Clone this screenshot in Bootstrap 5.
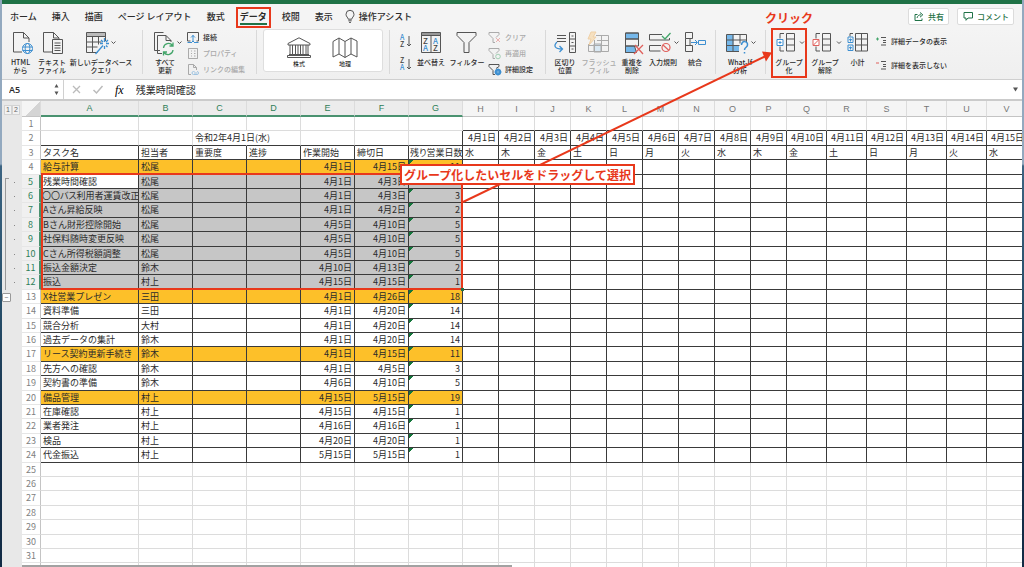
<!DOCTYPE html>
<html lang="ja">
<head>
<meta charset="utf-8">
<meta name="viewport" content="width=device-width, initial-scale=1">
<title>タスク管理表</title>
<link rel="stylesheet" href="https://cdn.jsdelivr.net/npm/bootstrap@5.3.0/dist/css/bootstrap.min.css">
<style>
:root{--xl:#1f7246;--mark:#e8381b;--ink:#2b2b2b;--blue:#3d8fd1}
body{font-family:"Noto Sans CJK JP",sans-serif;font-size:9px;line-height:12px;color:var(--ink);
 background:linear-gradient(#93a9bf 0,#93a9bf 164px,#3c6482 166px,#28506b 300px,#16304c 430px,#122b45 100%)}
.app-window{margin:0 2px;background:#fff}
.title-strip{height:4px;background:var(--xl)}
.tab-bar{height:25px;background:#f4f4f4;padding:0 8px 0 8px}
.tab-bar .tabs{gap:15px}
.tab-bar a{color:var(--ink);text-decoration:none;font-weight:500;white-space:nowrap;position:relative}
.tab-bar a.on{font-weight:700}
.tab-bar a.on::after{content:"";position:absolute;left:0;right:0;bottom:-2px;height:2px;background:var(--xl)}
.tab-bar a.on::before{content:"";position:absolute;inset:-4px -4px -5px;border:2px solid var(--mark)}
.top-btn{font-size:8px;line-height:10px;font-weight:500;color:var(--xl);background:#fff;border:1px solid #dcdcdc;border-radius:2px;height:17px;padding:0 4px 0 5px;gap:4px;white-space:nowrap}
.ribbon{display:grid;height:51px;background:linear-gradient(#f4f4f4,#efefef);border-bottom:1px solid #cfcfcf;padding:1px 0 0 2px;
 grid-template-columns:33px 30px 68px 14px 32px 69px 13px 120px 13px 19px 32px 40px 53px 10px 30px 38px 28px 34px 30px 11px 38px 12px 36px 36px 29px auto}
.tool{border:0;background:none;padding:0;font-size:7px;line-height:8px;font-weight:500;color:var(--ink);display:flex;flex-direction:column;align-items:center;white-space:nowrap;position:relative;min-width:0}
.tool svg{flex:none;height:28px}
.off{color:#a9a9a9!important}
.off svg{opacity:.45}
.vr-line{width:1px;height:44px;background:#d9d9d9;margin:0 auto}
.stack{margin-top:-1px;padding-left:2px}
.stack.wide{padding-left:6px}
.mini{border:0;background:none;padding:0;display:flex;align-items:center;gap:4px;font-size:7px;line-height:16px;height:16px;font-weight:500;color:var(--ink);white-space:nowrap}
.mini svg{flex:none}
.types{height:43px;margin:-1px 1px 0;background:#fff;border:1px solid #dedede;border-radius:3px}
.types button{font-size:6px;line-height:8px;border:0;background:none;padding:3px 0 0;display:flex;flex-direction:column;align-items:center;gap:2px;width:46px}
.ringed::after{content:"";position:absolute;inset:-2px 0 1px;border:2px solid var(--mark)}
svg{fill:none;stroke:#555;stroke-width:1;overflow:visible;display:block}
.b{stroke:var(--blue)}.g{stroke:#43a56a}.r{stroke:#e0605c}
svg text{stroke:none;fill:#444;font-size:8px;font-weight:500}
svg text.bt{fill:var(--blue)}
svg .small-az text{font-size:7px}
.formula{height:19px}
.formula input{border:0;background:none;outline:0;padding:0;color:var(--ink);font-size:10px;line-height:16px}
.name-box{width:62px;border-right:1px solid #d0d0d0;padding:0 4px 0 7px}
.formula .name-box input{width:40px;font-family:"Open Sans",sans-serif;font-size:9px;font-weight:600}
.formula button,.name-box button{border:0;background:none;padding:0}
.fx{font-family:"Liberation Serif",serif;font-style:italic;font-size:12px}
.sheet{border-top:2px solid #cbcbcb;background:#fff;position:relative}
.grid-table{table-layout:fixed;border-collapse:separate;border-spacing:0;width:1043px;margin:0}
.grid-table th,.grid-table td{padding:0 2px;height:14px;line-height:13px;font-size:9px;font-weight:400;border:0 solid #dcdcdc;border-width:0 1px 1px 0;white-space:nowrap;overflow:hidden}
.grid-table td.text-end{padding-left:0}
.grid-table tbody tr:nth-child(5n+2)>*,.grid-table tbody tr:nth-child(5n+4)>*{height:15px;line-height:14px}
.grid-table thead th{height:16px;line-height:14px;text-align:center;font-family:"Liberation Sans",sans-serif;color:#777;background:#f5f5f5;border-bottom-color:#c4c4c4;padding:0}
.grid-table thead th.sel{color:#2f8059;background:#ececec;border-bottom:2px solid #4a9270}
.grid-table thead th.corner{background:linear-gradient(135deg,#f5f5f5 55%,#d4d4d4 55%);border-bottom-width:1px}
.grid-table .gut{background:#e8e8e8!important;border:0;position:relative;overflow:visible;color:#777;padding:0}
.gut button{width:8px;height:10px;line-height:8px;font-size:7px;padding:0;border:1px solid #d3d3d3;background:#f2f2f2;color:#666;display:inline-block}
.gut.in::before{content:"";position:absolute;left:3px;top:0;bottom:0;width:1px;background:#999}
.gut.first::before{top:3px;width:4px;background:none;border:solid #999;border-width:1px 0 0 1px}
.gut.in::after{content:"";position:absolute;left:12px;top:7px;width:1px;height:1px;background:#888}
.grid-table td.gut button{width:9px;height:9px;line-height:7px;border-color:#999;background:#fff;display:block;border-radius:1px}
.grid-table th.num{color:#808080;text-align:center;padding:0;background:#fff;border-color:#e6e6e6;border-right-color:#c4c4c4}
.grid-table th.num.sel{color:#2f8059;background:#f0f0f0;border-right:2px solid #4a9270}
.grid-table td.k{border-bottom-color:#3a3a3a;border-right-color:#3a3a3a}
.grid-table td.kb{border-bottom-color:#3a3a3a}
.grid-table td.nr{border-right-color:transparent}
.grid-table td.spill{overflow:visible}
.grid-table td.tight{font-feature-settings:"palt";padding:0 0 0 1px}
.grid-table td.top{background:#fdc029}
.grid-table td.pick{background:#c6c6c6}
.grid-table td.tri{background-image:linear-gradient(135deg,#14763b 3px,transparent 3px)}
.hbar{position:absolute;left:20px;bottom:0;width:48%;height:2px;background:#a2a2a2}
.notes{position:absolute;left:0;top:0;pointer-events:none}
.callout{position:absolute;left:400px;top:164px;height:21px;line-height:17px;border:2px solid var(--mark);background:#fff;color:var(--mark);font-size:12px;font-weight:700;padding:0 2px;white-space:nowrap}
.click-note{position:absolute;left:765px;top:10px;color:var(--mark);font-size:12px;line-height:15px;font-weight:700}
</style>
</head>
<body class="vh-100 overflow-hidden position-relative">
<div class="app-window d-flex flex-column h-100 overflow-hidden">
<div class="title-strip flex-shrink-0"></div>
<nav class="tab-bar d-flex align-items-center flex-shrink-0">
 <div class="tabs d-flex align-items-center">
  <a href="#">ホーム</a><a href="#">挿入</a><a href="#">描画</a><a href="#">ページ レイアウト</a><a href="#">数式</a><a href="#" class="on">データ</a><a href="#">校閲</a><a href="#">表示</a>
 </div>
 <a href="#" class="d-flex align-items-center gap-1 ms-2 ps-1"><svg width="10" height="13" viewBox="0 0 10 13"><path d="M3.2 9.2C3.2 7.5 1 6.800 1 4.300a4 4 0 0 1 8 0C9 6.800 6.800 7.500 6.800 9.200zM3.300 10.800h3.400M4 12.400h2"/></svg>操作アシスト</a>
 <div class="ms-auto d-flex gap-2">
  <button class="top-btn d-flex align-items-center"><svg width="10" height="9" viewBox="0 0 10 9" style="stroke:#1f7246"><path d="M3.500 2.500H1v6h7V6.500M3 6C3.500 3.800 5 2.800 7 2.800M6 .5 8.800 2.800 6 5.200"/></svg>共有</button>
  <button class="top-btn d-flex align-items-center"><svg width="10" height="9" viewBox="0 0 10 9" style="stroke:#1f7246"><path d="M1 .5h8.500v5.500H5L3 8.300V6H1z"/></svg>コメント</button>
 </div>
</nav>
<div class="ribbon flex-shrink-0">
 <button class="tool"><svg width="33" viewBox="4 30 33 28"><path d="M22 52h-8.500V32.500h10l5.500 5.500v4M23.500 32.500v5.500h5.500"/><g class="b"><circle cx="27.500" cy="48.500" r="5"/><ellipse cx="27.500" cy="48.500" rx="2.300" ry="5"/><path d="M22.500 47h10M22.500 50.500h10"/></g></svg>HTML<br>から</button>
 <button class="tool"><svg width="30" viewBox="37 30 30 28"><path d="M52 52h-8.500V32.500h10l5.500 5.500v1M53.500 32.500v5.500h5.500M52.500 39.500h10v14h-10zM54.500 43h6M54.500 45.500h6M54.500 48h6M54.500 50.500h6"/></svg>テキスト<br>ファイル</button>
 <button class="tool"><svg width="68" viewBox="67 30 68 28"><path fill="#bbb" d="M86.500 32.500h19v4h-19z"/><path d="M105.500 41v-4.500h-19v16h11M86.500 42h15M86.500 47h11M92.500 36.500v16M98.500 36.500v8"/><g class="b"><path d="M95.500 54 103 45.500M104.500 38v4M104.500 46v3M100 43.500h3M106 43.500h3M101 40l2 2M108 40l-2 2M107.500 47l-1.500-1.500" stroke-width="1.300"/></g><path d="m111.500 41.500 2 2 2-2"/></svg>新しいデータベース<br>クエリ</button>
 <div class="vr-line"></div>
 <button class="tool"><svg width="32" viewBox="149 30 32 28"><path d="M160 50.500h-5.500V32.500h9M162 53.500h-4.500V35.500h8.500l5 5v1.500M166 35.500v5h5"/><g class="g" stroke-width="1.300"><path d="M163.500 48a5 5 0 0 1 9-2.500M173 50a5 5 0 0 1-9 2.500M173 42.500v3.500h-3.500M163.500 55.500V52h3.500"/></g><path d="m177.500 41.500 2 2 2-2"/></svg>すべて<br>更新</button>
 <div class="stack wide">
  <button class="mini"><svg width="12" height="13" viewBox="0 0 12 13"><path d="M3.500 10H.5V1.500h11V10h-2"/><path class="b" d="M.5 11.500h3.500M8 11.500h3.500M6 4v6M4 6.500l2-2 2 2M4 12l2-2 2 2"/></svg>接続</button>
  <button class="mini off" disabled><svg width="12" height="13" viewBox="0 0 12 13"><path d="M1.500 1.500h9v10h-9zM4 4h1M7 4h1.500M4 6.500h1M7 6.500h1.500M4 9h1M7 9h1.500"/></svg>プロパティ</button>
  <button class="mini off" disabled><svg width="12" height="13" viewBox="0 0 12 13"><path d="M4 11.500H1.500V1.500h5l3 3v2.500M6.500 1.500v3h3"/><path class="b" d="M5 10a1.500 1.500 0 0 1 1.500-1.500h1M10 8.500a1.500 1.500 0 0 1 0 3H6.500A1.500 1.500 0 0 1 5 10M7 10h3"/></svg>リンクの編集</button>
 </div>
 <div class="vr-line"></div>
 <div class="types d-flex ps-2 pt-1 mx-0">
  <div class="d-flex ps-1 w-100">
  <button><svg width="26" height="21" viewBox="0 0 26 21" stroke-width=".8"><path d="M2 6.500 13 .8l11 5.700v1.500H2zM4 8v9.500M6.500 8v9.500M9.500 8v9.500M12 8v9.500M14.500 8v9.500M17 8v9.500M20 8v9.500M22 8v9.500M3 17.500h20M1.500 20.500h23v-2h-23z"/></svg>株式</button>
  <button><svg width="26" height="21" viewBox="0 0 26 21" stroke-width=".8"><path d="M1 4.500 7 1l6 3.500L19 1l6 3v16l-6-3-6 3.500L7 17l-6 3zM7 1v16M13 4.500v16M19 1v16"/></svg>地理</button>
  </div>
 </div>
 <div class="vr-line"></div>
 <button class="tool" aria-label="昇順と降順"><svg width="19" viewBox="396 30 19 28"><g class="small-az"><text class="bt" x="400" y="40">A</text><text x="400" y="47">Z</text><text x="400" y="63">Z</text><text class="bt" x="400" y="70">A</text></g><path d="M409 36v10M407 44l2 2 2-2M409 59v10M407 67l2 2 2-2"/></svg></button>
 <button class="tool"><svg width="32" viewBox="415 30 32 28"><path fill="#999" d="M421.500 32.500h19v3h-19z"/><path d="M421.500 35.500h19v17h-19zM431 35.500v17"/><text x="423" y="44">Z</text><text class="bt" x="423" y="51">A</text><text class="bt" x="433" y="44">A</text><text x="433" y="51">Z</text></svg>並べ替え</button>
 <button class="tool"><svg width="40" viewBox="447 30 40 28"><path d="M457 32.500h19v3l-7 7v10h-5v-10l-7-7z"/></svg>フィルター</button>
 <div class="stack">
  <button class="mini off" disabled><svg width="12" height="13" viewBox="0 0 12 13"><path d="M0 1.500h10v2L7 6.500M0 1.500v2l4 4v4h2"/><path class="r" d="m7 7 4 4M11 7l-4 4"/></svg>クリア</button>
  <button class="mini off" disabled><svg width="12" height="13" viewBox="0 0 12 13"><path d="M0 1.500h10v2L7 6.500M0 1.500v2l4 4v4h2"/><circle class="g" cx="9" cy="9.500" r="2.300"/></svg>再適用</button>
  <button class="mini"><svg width="12" height="13" viewBox="0 0 12 13"><path d="M0 1.500h10v2L7 5.500M0 1.500v2l4 4v4h2"/><circle cx="9" cy="9" r="2.200" class="b" stroke-width="2"/><path class="b" d="M9 5.500v7M5.500 9h7"/></svg>詳細設定</button>
 </div>
 <div class="vr-line"></div>
 <button class="tool"><svg width="30" viewBox="550 30 30 28"><path d="M557 35.500h9M557 38.500h9M557 41.500h9M569.500 32.500h6v20h-6zM569.500 39h6M569.500 46h6M571.500 36h2M571.500 42.500h2M571.500 49h2"/><path class="b" stroke-width="1.300" d="M557 42c-4 4-2 7 5 7M559.500 46l3 3-3 3"/></svg>区切り<br>位置</button>
 <button class="tool off" disabled><svg width="38" viewBox="580 30 38 28"><path fill="#bcdcf5" d="M594 44h7v8h-7z"/><path d="M596 35.500h12.500v16H588.500V44M588.500 45.500h20M594.500 40v11.500M601.500 35.500v16M597 40.500h11.500"/><path fill="#f9ca83" stroke="#eba64a" d="M591 32h5l-3 5h3l-7 8 2-6h-3z"/></svg>フラッシュ<br>フィル</button>
 <button class="tool"><svg width="28" viewBox="618 30 28 28"><path fill="#76b8ea" d="M625.500 33h13v6h-13zM625.500 46h9l2 6.500h-11z"/><path d="M638.500 46V33h-13v19.500h8M625.500 39h13M625.500 46h13"/><path class="r" stroke-width="1.300" d="m635 45 8 9M643 45l-9 9"/></svg>重複を<br>削除</button>
 <button class="tool"><svg width="34" viewBox="646 30 34 28"><path d="M662 34.500h-12.500v5.500h20V38M661 45.500h-11.500v5.500h11"/><path class="g" stroke-width="1.300" d="m662 36 3 3 5.500-6"/><g class="r" stroke-width="1.200"><circle cx="666" cy="47.500" r="4"/><path d="m663 45 6 5.500"/></g><path d="m674.500 41.500 2 2 2-2"/></svg>入力規則</button>
 <button class="tool"><svg width="30" viewBox="680 30 30 28"><path d="M685.500 32.500h7v6h-7zM685.500 38.500V51.500h7v-6h-7M690 38.500v7"/><path class="b" d="M691 42.500h6M695 40l2.500 2.500L695 45M698.500 40.500h7v4h-7z"/></svg>統合</button>
 <div class="vr-line"></div>
 <button class="tool"><svg width="38" viewBox="721 30 38 28"><path fill="#76b8ea" stroke="none" d="M726.500 35h7v16h-7zM733 45h6v6h-6z"/><path d="M739 51.500h-12.500V34.500h20V42M726.500 40h20M726.500 45.500h13M733 34.500v17M740 34.500v9"/><path class="b" stroke-width="1.500" d="M741.500 45c0-5 6.500-4 6 0 0 2.500-3 2-3 5M744.500 52v1.500"/><path d="m751.500 41.500 2 2 2-2"/></svg>What-If<br>分析</button>
 <div class="vr-line"></div>
 <button class="tool ringed"><svg width="36" viewBox="771 30 36 28"><path d="M786.500 33.500h8v17.500h-8zM786.500 39h8M786.500 45h8M784 33.500h-4v5M780 46.500V51h4"/><path class="b" fill="#fff" d="M777 39.500h6v6h-6zM778.500 42.500h3M780 41v3"/><path d="m800 41.500 2 2 2-2"/></svg>グループ<br>化</button>
 <button class="tool"><svg width="36" viewBox="807 30 36 28"><path d="M822.500 33.500h8v17.500h-8zM822.500 39h8M822.500 45h8M820 33.500h-4v5M816 46.500V51h4"/><path class="r" fill="#fff" d="M813 39.500h6v6h-6zM813.500 45l5-5"/><path d="m837 41.500 2 2 2-2"/></svg>グループ<br>解除</button>
 <button class="tool"><svg width="29" viewBox="843 30 29 28"><path d="M855.500 33.500h12v17.500h-12zM855.500 39h12M855.500 45h12M861.500 33.500V51M853 33.500h-3v3M850 50.500V51"/><path class="b" d="M848 37h5v5.500h-5zM848 45h5v5.500h-5zM849 39.700h3M850.500 38.500v3M849 47.700h3M850.500 46.500v3"/></svg>小計</button>
 <div class="ps-1 d-flex flex-column gap-2 pt-1 stack">
  <button class="mini"><svg width="11" height="10" viewBox="0 0 11 10"><path d="M5 1.500h5M7 4.500h3M7 6.500h3M5 9h5"/><path class="g" d="M0 3h3M1.500 1.500v3"/></svg>詳細データの表示</button>
  <button class="mini"><svg width="11" height="10" viewBox="0 0 11 10"><path d="M5 1.500h5M7 4.500h3M7 6.500h3M5 9h5"/><path class="r" d="M0 3h3"/></svg>詳細を表示しない</button>
 </div>
</div>
<div class="formula d-flex align-items-center flex-shrink-0">
 <div class="name-box h-100 d-flex align-items-center justify-content-between"><input value="A5" aria-label="名前ボックス"><button aria-label="上下"><svg width="5" height="11" viewBox="0 0 5 11"><path fill="#555" stroke="none" d="M.5 3.500h4L2.500 0zM.5 7.500h4L2.500 11z"/></svg></button></div>
 <button class="ps-2" aria-label="キャンセル"><svg width="9" height="9" viewBox="0 0 9 9" style="stroke:#bbb"><path stroke-width="1.300" d="m1 1 7 7M8 1 1 8"/></svg></button>
 <button class="ms-2 ps-1" aria-label="入力"><svg width="10" height="9" viewBox="0 0 10 9" style="stroke:#bbb"><path stroke-width="1.500" d="m.5 5 3 3L9.500 1"/></svg></button>
 <button class="fx ms-2 ps-1 pe-2" aria-label="関数の挿入">fx</button>
 <input class="flex-grow-1 ps-1" value="残業時間確認" aria-label="数式バー">
 <button class="pe-1" aria-label="展開"><svg width="5" height="5" viewBox="0 0 5 5"><path fill="#555" stroke="none" d="M0 .5h5L2.500 4.500z"/></svg></button>
</div>
<main class="sheet flex-grow-1 overflow-hidden">
 <table class="grid-table"><colgroup id="cols"></colgroup><thead><tr id="head"></tr></thead><tbody id="body"></tbody></table>
 <div class="hbar"></div>
</main>
</div>
<svg class="notes" width="1024" height="567" viewBox="0 0 1024 567">
 <g style="stroke:#e8381b" stroke-width="2"><rect x="42" y="174" width="420" height="115"/><path d="M463 202 766 56"/></g>
 <path d="M762 51.500 772 52.500 766 61.500z" fill="#e8381b" stroke="none"/>
 <path d="M461 288h3v3h-3z" fill="#1f7246" stroke="none"/>
</svg>
<div class="callout">グループ化したいセルをドラッグして選択</div>
<div class="click-note">クリック</div>
<script>
// Column widths: outline gutter, row numbers, A to V
const widths=[20,19,98,...Array(6).fill(54),...Array(9).fill(36),...Array(6).fill(40)];
document.getElementById('cols').innerHTML=widths.map(w=>`<col style="width:${w}px">`).join('');
document.querySelector('.grid-table').style.width=widths.reduce((a,b)=>a+b)+'px';
const letters='ABCDEFGHIJKLMNOPQRSTUV'.split('');
document.getElementById('head').innerHTML='<th class="gut"><button>1</button><button>2</button></th><th class="corner"></th>'+
 letters.map((l,i)=>`<th class="${i<7?'sel':''}">${l}</th>`).join('');
// Rows 4 onwards: task, owner, start, deadline, business days left
const tasks=[
 ['給与計算','松尾','4月1日','4月15日','11'],['残業時間確認','松尾','4月1日','4月3日','3'],
 ['〇〇バス利用者運賃改正','松尾','4月1日','4月3日','3'],['Aさん昇給反映','松尾','4月1日','4月2日','2'],
 ['Bさん財形控除開始','松尾','4月5日','4月10日','5'],['社保料随時変更反映','松尾','4月5日','4月10日','5'],
 ['Cさん所得税額調整','松尾','4月5日','4月10日','5'],['振込金額決定','鈴木','4月10日','4月13日','2'],
 ['振込','村上','4月15日','4月15日','1'],['X社営業プレゼン','三田','4月1日','4月26日','18'],
 ['資料準備','三田','4月1日','4月20日','14'],['競合分析','大村','4月1日','4月20日','14'],
 ['過去データの集計','鈴木','4月1日','4月20日','14'],['リース契約更新手続き','鈴木','4月1日','4月15日','11'],
 ['先方への確認','鈴木','4月1日','4月5日','3'],['契約書の準備','鈴木','4月6日','4月10日','5'],
 ['備品管理','村上','4月15日','5月15日','19'],['在庫確認','村上','4月15日','4月15日','1'],
 ['業者発注','村上','4月16日','4月16日','1'],['検品','村上','4月20日','4月20日','1'],
 ['代金振込','村上','5月15日','5月15日','1']];
const titles=['タスク名','担当者','重要度','進捗','作業開始','締切日','残り営業日数'];
const parents=[4,13,17,20];
let html='';
for(let r=1;r<=32;r++){
 const picked=r>=5&&r<=12;
 html+=`<tr><td class="gut ${picked?'in':''} ${r===5?'first':''}">${r===13?'<button aria-label="折りたたむ">−</button>':''}</td><th class="num ${picked?'sel':''}">${r<32?r:''}</th>`;
 for(let c=0;c<22;c++){
  let text='',cls=[];
  if(r===1&&c>6)cls.push('kb');
  if(r===2){cls.push(c>5?'k':'kb');if(c===2){text='令和2年4月1日(水)';cls.push('spill','nr')}
   if(c>6){text=`4月${c-6}日`;cls.push('text-end')}}
  if(r>=3&&r<=24)cls.push('k');
  if(r===3)text=c<7?titles[c]:'水木金土日月火'[(c-7)%7];
  if(r===3&&c===6)cls.push('tight');
  if(r>=4&&r<=24&&c<7){
   const t=tasks[r-4];
   text=[t[0],t[1],'','',t[2],t[3],t[4]][c];
   if(c>3)cls.push('text-end');
   if(c===0&&text.length>10)cls.push('tight');
   if(c===6)cls.push('tri');
   if(parents.includes(r))cls.push('top');
   if(picked&&!(r===5&&c===0))cls.push('pick');
  }
  html+=`<td class="${cls.join(' ')}">${text}</td>`;
 }
 html+='</tr>';
}
document.getElementById('body').innerHTML=html;
</script>
<script src="https://cdn.jsdelivr.net/npm/bootstrap@5.3.0/dist/js/bootstrap.bundle.min.js"></script>
</body>
</html>
